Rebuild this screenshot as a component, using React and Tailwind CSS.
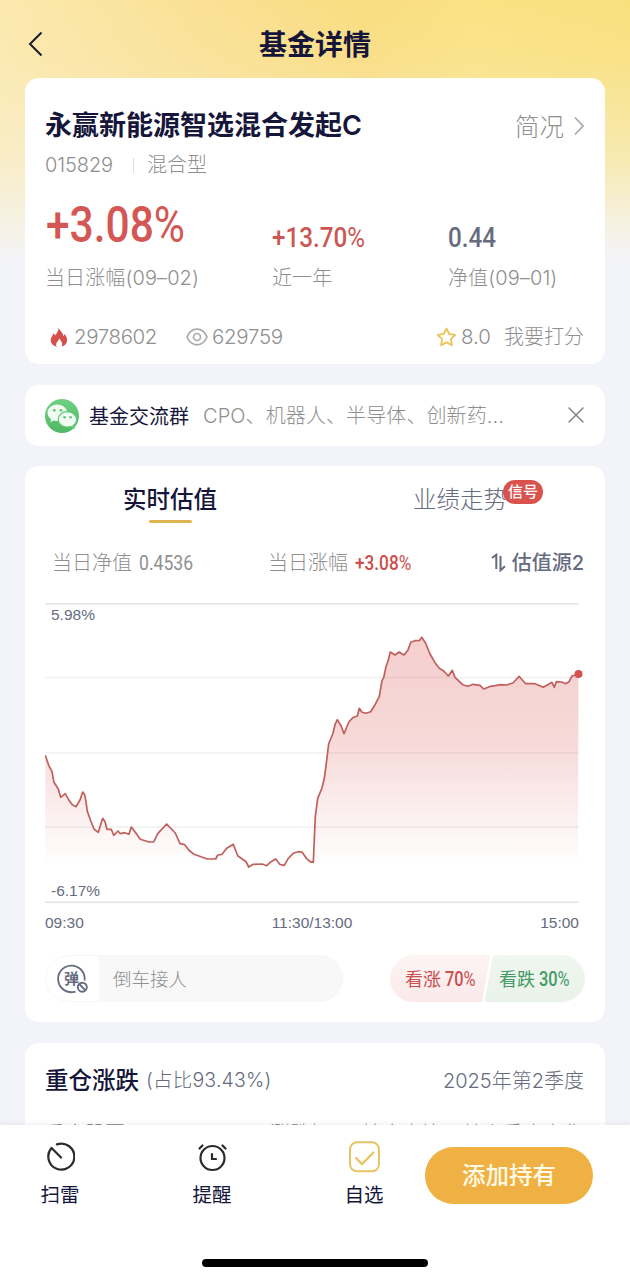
import React from "react";
import { FiX } from "react-icons/fi";

const trend = [
  [0.3, 155.3], [3.7, 165.3], [7, 171.7], [9, 182.3], [13.3, 189], [15.7, 197.3], [20.3, 193.7], [24, 200.3],
  [27.3, 204.7], [31, 206.7], [35, 200], [37.7, 192], [39.7, 194.7], [41, 201.7], [42.3, 211.3], [45.7, 220.7],
  [49, 229], [53.3, 232.3], [57.7, 218.3], [60, 221.7], [62, 229.3], [66.3, 229.3], [68.7, 235.3], [73, 231],
  [75.3, 233.7], [79.7, 232.7], [84, 234.3], [86.3, 227], [91, 233.3], [95.3, 239.3], [104, 242], [108.7, 242],
  [112.7, 233.7], [121.7, 224], [130.3, 233], [135, 243.7], [139.7, 244.7], [143.7, 250], [149, 254.3],
  [156.7, 257], [162.3, 259], [170.7, 259], [172.7, 255], [177, 254.3], [181.7, 248.3], [188.3, 244.3],
  [192.7, 255.7], [201, 261.7], [203.7, 267], [208.3, 264.3], [217, 264], [221.7, 265.7], [226, 261.7],
  [230.7, 259], [234.7, 264.3], [239.3, 265.3], [243.3, 258.3], [248.3, 253.3], [253.3, 251.7], [257, 252],
  [261.7, 258.7], [265, 261.7], [268.3, 262.3], [270.3, 216.7], [272.7, 198.3], [277, 188], [279.3, 178.3],
  [281.3, 163.3], [283.7, 143.7], [288, 133.3], [290, 124.7], [292.3, 119.7], [296.3, 126.3], [299, 133.7],
  [303.7, 122.3], [307.7, 117.7], [312.3, 116], [314.3, 108.3], [317, 112.3], [321, 113.3], [325.7, 111.7],
  [329.7, 105.3], [334.3, 96.3], [337, 80.7], [338.7, 77.7], [341, 66.7], [343.3, 60], [345.3, 52], [350, 55],
  [354, 52], [359, 55], [363, 50], [365.7, 42.3], [370, 40.7], [374.7, 40.3], [376.7, 37.3], [380.7, 43.3],
  [385, 54], [390, 62.7], [394.3, 68.3], [398.3, 70.7], [403.3, 76], [407.3, 70.3], [410, 77.3], [417.7, 84.7],
  [422.7, 86.3], [428.3, 84.3], [435, 85.3], [438.7, 89], [444.3, 86.7], [456, 84.7], [461.7, 85],
  [468.3, 82.7], [474, 76.3], [480.7, 83.7], [490, 83.7], [498.3, 87.3], [507, 82.3], [509.3, 87.3],
  [511.3, 81.7], [516.7, 82], [520.7, 83.7], [524, 81.7], [527, 76], [533.5, 74.3],
];

function TrendChart() {
  const line = trend.map(([x, y]) => `${x},${y}`).join(" ");

  return (
    <svg width="540" height="306" viewBox="0 0 540 306" className="block">
      <defs>
        <linearGradient id="area" x1="0" y1="37" x2="0" y2="266" gradientUnits="userSpaceOnUse">
          <stop offset="0" stopColor="#d9534f" stopOpacity="0.28" />
          <stop offset="0.45" stopColor="#d9534f" stopOpacity="0.22" />
          <stop offset="1" stopColor="#d9534f" stopOpacity="0" />
        </linearGradient>
      </defs>
      {[77.5, 153, 227].map((y) => (
        <line key={y} x1="0" x2="533.5" y1={y} y2={y} stroke="#efeff1" strokeWidth="1.3" />
      ))}
      {[3.8, 302.2].map((y) => (
        <line key={y} x1="0" x2="533.5" y1={y} y2={y} stroke="#e2e3e6" strokeWidth="1.5" />
      ))}
      <polygon points={`0.3,266 ${line} 533,266`} fill="url(#area)" />
      <polyline points={line} fill="none" stroke="#c0605c" strokeWidth="1.7" strokeLinejoin="round" />
      <circle cx="533.5" cy="74" r="4" fill="#d4504f" />
    </svg>
  );
}

function FlameIcon() {
  return (
    <svg width="18" height="20" viewBox="0 0 18 20" className="block">
      <path
        d="M8.6 0.3C9 3.6 13.3 5.4 13.4 9.2C14 8.7 14.3 8 14.3 7C16.4 9 17.4 11.3 17.1 13.8C16.8 16.7 14.7 18.8 12 19.6C12.8 16.4 11.3 13.8 9.2 11.6C9 14 6.3 14.6 6.2 17C6.1 18.2 6.3 18.9 6.8 19.7C3 18.9 0.7 16.3 0.7 13C0.8 10 3 8.6 3.4 6.2C4.4 6.8 4.9 7.6 5 8.6C7.2 6.2 8.6 3.6 8.6 0.3Z"
        fill="#d4514d"
      />
    </svg>
  );
}

function EyeIcon() {
  return (
    <svg width="22" height="18" viewBox="0 0 22 18" fill="none" stroke="#aaa" strokeWidth="1.7" className="block">
      <path d="M1 9C3.2 3.8 6.8 1.2 11 1.2S18.8 3.8 21 9C18.8 14.2 15.2 16.8 11 16.8S3.2 14.2 1 9Z" />
      <circle cx="11" cy="9" r="3.5" />
    </svg>
  );
}

function StarIcon() {
  return (
    <svg width="21" height="20" viewBox="0 0 21 20" className="block">
      <path
        d="M10.5 1.5L13.2 7L19.3 7.9L14.9 12.2L15.9 18.3L10.5 15.4L5.1 18.3L6.1 12.2L1.7 7.9L7.8 7Z"
        fill="none"
        stroke="#ebc456"
        strokeWidth="1.8"
        strokeLinejoin="round"
      />
    </svg>
  );
}

function WechatIcon() {
  return (
    <svg width="34" height="34" viewBox="0 0 34 34" className="block">
      <defs>
        <linearGradient id="wechat" x1="0" y1="0" x2="0" y2="1">
          <stop offset="0" stopColor="#6fd184" />
          <stop offset="1" stopColor="#50b865" />
        </linearGradient>
      </defs>
      <circle cx="17" cy="17" r="17" fill="url(#wechat)" />
      <path
        d="M12.300 5.500C6.700 5.500 2.500 9.300 2.500 13.800C2.500 16.500 4 18.900 6.200 20.300L5.400 23.200L8.800 21.500C10 21.900 11.300 22 12.500 22C17.800 22 22.200 18.400 22.200 13.800C22.200 9.300 17.800 5.500 12.300 5.500Z"
        fill="#f2fbf3"
      />
      <path
        d="M22.300 12.700C17.200 12.700 13.200 16.200 13.200 20.400C13.200 24.800 17.200 28 22.300 28C23.500 28 24.600 27.800 25.600 27.500L28.700 29.100L28 26.500C30.200 25.100 31.600 22.900 31.600 20.400C31.600 16.200 27.400 12.700 22.300 12.700Z"
        fill="#f2fbf3"
        stroke="#5fc873"
        strokeWidth="1.200"
      />
      <circle cx="9.3" cy="11.3" r="1.4" fill="#5fc873" />
      <circle cx="16" cy="11.3" r="1.4" fill="#5fc873" />
      <circle cx="19.6" cy="18.3" r="1.3" fill="#5fc873" />
      <circle cx="25.5" cy="18.3" r="1.3" fill="#5fc873" />
    </svg>
  );
}

function SwapIcon() {
  return (
    <svg width="16" height="19" viewBox="0 0 16 19" fill="none" stroke="#666b80" strokeWidth="2" className="block">
      <path d="M1 5L5.300 1.800V16" />
      <path d="M9.500 3V17.300L14 13.200" />
    </svg>
  );
}

function BulletIcon() {
  return (
    <span className="relative block h-8 w-8">
      <svg width="32" height="32" viewBox="0 0 32 32" fill="none" stroke="#666b80" strokeWidth="1.9" className="block">
        <path d="M19.5 28.6A13.300 13.300 0 1 1 28.6 17.500" />
        <circle cx="26.3" cy="24.200" r="4.500" />
        <path d="M23.2 21L29.4 27.400" />
      </svg>
      <span className="absolute left-[8px] top-[8px] text-[15px] font-bold leading-[15px] text-[#666b80]">弹</span>
    </span>
  );
}

function Percent({ value }) {
  return (
    <>
      {value}
      <span className="font-normal">%</span>
    </>
  );
}

function Stat({ value, label, big, className, color }) {
  return (
    <div className={className}>
      <div className="flex h-[56px] items-end">
        {big ? (
          <span className="ml-[1px] origin-left scale-x-[0.85] font-[Roboto] text-[50px] font-medium leading-[53px] text-[#d35754]">
            {value}
          </span>
        ) : (
          <span className={`-mb-[5px] origin-left scale-x-[0.865] font-[Roboto] text-[28px] font-medium leading-[38px] ${color}`}>
            {value}
          </span>
        )}
      </div>
      <div className="mt-[12px] text-[20px] font-light leading-[28px] tracking-[0.1px] text-[#8f8f8f]">{label}</div>
    </div>
  );
}

function TabItem({ icon, label }) {
  return (
    <div className="flex w-[80px] flex-col items-center">
      <div className="flex h-8 items-center">{icon}</div>
      <div className="mt-[8px] text-[19.5px] leading-[28px] text-[#15163a]">{label}</div>
    </div>
  );
}

export default function App() {
  return (
    <div className="flex h-[1280px] w-[630px] flex-col overflow-hidden bg-[#f3f4fa] font-[Inter,'Noto_Sans_CJK_SC',sans-serif]">
      <div className="h-[1125px] overflow-hidden bg-[linear-gradient(180deg,rgba(243,244,250,0)_0px,rgba(247,241,222,0.1)_60px,rgba(246,241,221,0.55)_160px,#f5f2e6_230px,#f3f4fa_262px),linear-gradient(90deg,#fbe9ae_0%,#fae196_30%,#f9dd80_58%,#fae284_75%,#f9e07e_100%)] px-[25px]">
        <header className="flex h-[78px] items-center pt-[10px]">
          <svg width="16" height="28" viewBox="0 0 16 28" fill="none" stroke="#1c1c28" strokeWidth="2" className="ml-[3px]">
            <path d="M13.500 2.500L2 14L13.500 25.500" />
          </svg>
          <h1 className="flex-1 pr-[19px] pt-[2px] text-center text-[28px] font-bold leading-[40px] text-[#15163a]">基金详情</h1>
        </header>

        <section className="h-[286px] rounded-[14px] bg-white px-[20px] pt-[28px]">
          <div className="flex h-[40px] items-center justify-between">
            <h2 className="text-[27px] font-bold leading-[40px] text-[#15163a]">
              永赢新能源智选混合发起<span className="font-semibold">C</span>
            </h2>
            <span className="flex items-center text-[24.5px] font-light text-[#8f8f8f]">
              <span className="mt-[2px]">简况</span>
              <svg width="12" height="20" viewBox="0 0 12 20" fill="none" stroke="#aaa" strokeWidth="1.8" className="ml-[9px]">
                <path d="M2 1.500L10 10L2 18.500" />
              </svg>
            </span>
          </div>
          <div className="flex h-[38px] items-center text-[20px] font-light text-[#8f8f8f]">
            <span className="tracking-[-0.1px]">015829</span>
            <span className="ml-[20px] mr-[13px] h-[15px] w-px bg-[#ddd]" />
            <span>混合型</span>
          </div>
          <div className="mt-[12px] flex">
            <Stat value={<Percent value="+3.08" />} label="当日涨幅(09–02)" big className="w-[227px]" />
            <Stat value={<Percent value="+13.70" />} label="近一年" className="w-[176px]" color="text-[#cc5754]" />
            <Stat value="0.44" label="净值(09–01)" color="text-[#666b80]" />
          </div>
          <div className="mt-[31px] flex h-[28px] items-center pl-[5px] text-[20.5px] font-light text-[#8f8f8f]">
            <FlameIcon />
            <span className="ml-[6px] w-[83px] tracking-[-0.4px]">2978602</span>
            <span className="ml-[29px]"><EyeIcon /></span>
            <span className="ml-[4px] tracking-[-0.3px]">629759</span>
            <span className="ml-auto"><StarIcon /></span>
            <span className="ml-[4px]">8.0</span>
            <span className="ml-[13px] mr-[1px] text-[20px]">我要打分</span>
          </div>
        </section>

        <section className="mt-[21px] flex h-[61px] items-center rounded-[14px] bg-white px-[20px]">
          <WechatIcon />
          <span className="ml-[10px] mt-[2px] text-[20px] text-[#15163a]">基金交流群</span>
          <span className="ml-[14px] mt-[1px] text-[20px] font-light tracking-[0.1px] text-[#8f8f8f]">CPO、机器人、半导体、创新药...</span>
          <FiX size={28} strokeWidth={1.3} color="#888" className="-mr-[5px] -mt-[1px] ml-auto" />
        </section>

        <section className="mt-[20px] h-[556px] rounded-[14px] bg-white px-[20px]">
          <div className="flex h-[68px] pt-[15px]">
            <div className="flex w-[250px] flex-col items-center">
              <span className="text-[23.5px] font-medium leading-[38px] text-[#15163a]">实时估值</span>
              <span className="mt-[1px] h-[3px] w-[43px] rounded-full bg-[#e0b450]" />
            </div>
            <div className="flex flex-1 justify-center pl-[40px]">
              <span className="relative h-[38px] text-[23.5px] font-light leading-[38px] text-[#666b80]">
                业绩走势
                <span className="absolute left-[90px] top-[-1px] h-[24px] w-[40px] rounded-full bg-[#d9524e] text-center text-[15px] font-medium leading-[24px] text-white">
                  信号
                </span>
              </span>
            </div>
          </div>

          <div className="flex h-[56px] items-center pt-[1px] text-[20px] font-light text-[#8f8f8f]">
            <span className="ml-[7px]">当日净值</span>
            <span className="ml-[7px] w-[54px] origin-left scale-x-[0.88] font-[Roboto] text-[20px] font-normal">0.4536</span>
            <span className="ml-[75px]">当日涨幅</span>
            <span className="ml-[7px] w-[60px] origin-left scale-x-[0.86] font-[Roboto] text-[20px] font-medium text-[#cc4f4c]">
              <Percent value="+3.08" />
            </span>
            <span className="ml-auto"><SwapIcon /></span>
            <span className="ml-[5px] mr-[1px] text-[20px] font-medium text-[#666b80]">估值源2</span>
          </div>

          <div className="relative mt-[10px] h-[306px]">
            <TrendChart />
            <span className="absolute left-[6px] top-[4px] font-['Liberation_Sans'] text-[15.5px] leading-[22px] text-[#666b80]">5.98%</span>
            <span className="absolute bottom-[4px] left-[6px] font-['Liberation_Sans'] text-[15.5px] leading-[22px] text-[#666b80]">-6.17%</span>
          </div>
          <div className="flex h-[32px] items-center justify-between pr-[6px] pt-[2px] font-['Liberation_Sans'] text-[15.5px] text-[#666b80]">
            <span>09:30</span>
            <span>11:30/13:00</span>
            <span>15:00</span>
          </div>

          <div className="mt-[17px] flex h-[47px] justify-between">
            <div className="flex w-[298px] items-center overflow-hidden rounded-full border border-[#f7f7f7] bg-[#f8f8f8]">
              <div className="flex h-full w-[53px] items-center bg-white pl-[10px]">
                <BulletIcon />
              </div>
              <span className="ml-[14px] mt-[2px] text-[18.5px] font-light text-[#8f8f8f]">倒车接人</span>
            </div>
            <div className="relative flex h-[47px] w-[195px]">
              <svg width="195" height="47" viewBox="0 0 195 47" className="absolute left-0 top-0">
                <defs>
                  <linearGradient id="up" x1="0" y1="0" x2="0" y2="1">
                    <stop offset="0" stopColor="#fdf4f4" />
                    <stop offset="1" stopColor="#fbe9ea" />
                  </linearGradient>
                  <linearGradient id="down" x1="0" y1="0" x2="0" y2="1">
                    <stop offset="0" stopColor="#f0f6f0" />
                    <stop offset="1" stopColor="#e9f3e9" />
                  </linearGradient>
                </defs>
                <path d="M23.5 0H98Q100.5 0 100 2.5L92.5 45Q92 47 90 47H23.5A23.5 23.5 0 0 1 23.5 0Z" fill="url(#up)" />
                <path d="M105 0H171.5A23.5 23.5 0 0 1 171.5 47H97Q94.5 47 95 44.5L102.5 2Q103 0 105 0Z" fill="url(#down)" />
              </svg>
              <div className="relative flex w-[109px] items-center pl-[15px] pt-[2px] text-[#c9504e]">
                <span className="text-[18px]">看涨</span>
                <span className="ml-[4px] w-[28px] origin-left scale-x-[0.84] font-[Roboto] text-[19.5px] font-medium">
                  <Percent value="70" />
                </span>
              </div>
              <div className="relative flex items-center pt-[2px] text-[#449a68]">
                <span className="text-[18px]">看跌</span>
                <span className="ml-[4px] origin-left scale-x-[0.84] font-[Roboto] text-[19.5px] font-medium">
                  <Percent value="30" />
                </span>
              </div>
            </div>
          </div>
        </section>

        <section className="mt-[21px] h-[200px] rounded-[14px] bg-white px-[20px] pt-[18px]">
          <div className="flex h-[40px] items-center">
            <h3 className="text-[23.5px] font-medium text-[#15163a]">重仓涨跌</h3>
            <span className="ml-[7px] text-[19.5px] font-light tracking-[0.2px] text-[#666b80]">(占比93.43%)</span>
            <span className="ml-auto mr-[1px] text-[20px] font-light text-[#666b80]">2025年第2季度</span>
          </div>
          <div className="mt-[19px] flex text-[20px] font-light leading-[28px] text-[#888]">
            <span className="w-[225px]">重仓股票</span>
            <span className="w-[92px]">涨跌幅</span>
            <span className="w-[101px]">持仓占比</span>
            <span className="whitespace-nowrap">较上季度变化</span>
          </div>
        </section>
      </div>

      <footer className="relative flex h-[155px] flex-col items-center bg-white shadow-[0_-1px_5px_rgba(0,0,0,0.07)]">
        <div className="flex w-full pl-[20px] pt-[16px]">
          <TabItem
            label="扫雷"
            icon={
              <svg width="30" height="30" viewBox="0 0 30 30" fill="none" stroke="#2b2b2d" strokeWidth="2.2" strokeLinecap="round">
                <path d="M11.9 2.400A13 13 0 1 1 6.600 6L16 15.500" strokeLinejoin="round" />
              </svg>
            }
          />
          <div className="ml-[72px]">
            <TabItem
              label="提醒"
              icon={
                <svg width="30" height="30" viewBox="0 0 30 30" fill="none" stroke="#2b2b2d" strokeWidth="2.2" strokeLinecap="round">
                  <circle cx="15.5" cy="16" r="12" />
                  <path d="M15 12V17H19M5.500 3.500L2.500 6.500M25.500 3.500L28.500 6.500" />
                </svg>
              }
            />
          </div>
          <div className="ml-[72px]">
            <TabItem
              label="自选"
              icon={
                <svg width="31" height="32" viewBox="0 0 31 32" fill="none" stroke="#e8c264" strokeWidth="2">
                  <rect x="1" y="1.3" width="29" height="29" rx="7" />
                  <path d="M6.500 16.500L13 23L25 11" strokeWidth="2.3" />
                </svg>
              }
            />
          </div>
          <button className="ml-[21px] mt-[6px] h-[57px] w-[168px] rounded-full bg-[#efb144] text-[23.5px] font-medium text-[#fffbe8]">
            添加持有
          </button>
        </div>
        <div className="absolute top-[134px] h-[8px] w-[226px] rounded-full bg-black" />
      </footer>
    </div>
  );
}
